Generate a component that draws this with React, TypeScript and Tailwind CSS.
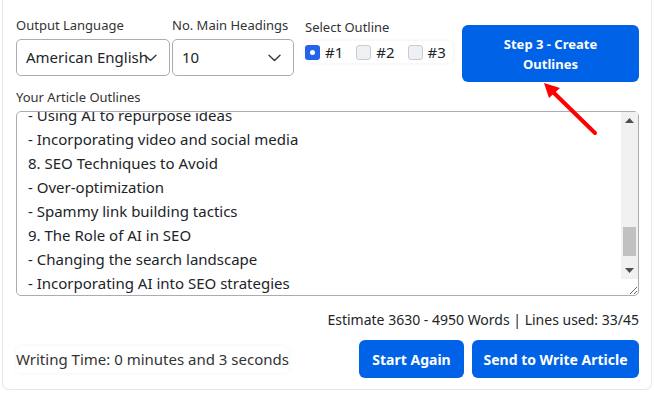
import { useEffect, useRef } from 'react'

const outline = [
  'Introduction',
  '- What this guide covers',
  '- Why AI is changing SEO',
  '1. Understanding SEO Basics',
  '- What is SEO',
  '- Why SEO matters',
  '2. Keyword Research Strategies',
  '- Finding the right keywords',
  '- Long-tail keywords',
  '3. On-Page SEO Optimization',
  '- Title tags and meta descriptions',
  '- Header tags and content structure',
  '4. Off-Page SEO Techniques',
  '- Building quality backlinks',
  '- Social media signals',
  '5. Technical SEO Essentials',
  '- Site speed and mobile friendliness',
  '- XML sitemaps and robots.txt',
  '6. Measuring SEO Success',
  '- Key metrics to track',
  '- Tools for SEO analysis',
  '7. Content Repurposing',
  '- Using AI to repurpose ideas',
  '- Incorporating video and social media',
  '8. SEO Techniques to Avoid',
  '- Over-optimization',
  '- Spammy link building tactics',
  '9. The Role of AI in SEO',
  '- Changing the search landscape',
  '- Incorporating AI into SEO strategies',
  '10. The Future of SEO',
  '- Voice search',
  '- Personalised results',
  'Conclusion',
  '- Key takeaways',
  '- Next steps',
]

function Chevron() {
  return (
    <svg width="13" height="8" viewBox="0 0 13 8" fill="none" className="shrink-0">
      <path d="M1 1.2 6.5 6.5 12 1.2" stroke="#343a40" strokeWidth="1.4" strokeLinecap="round" strokeLinejoin="round" />
    </svg>
  )
}

function Select({ value, width }: { value: string; width: string }) {
  return (
    <div className={`${width} h-[37px] flex items-center border border-[#a9adb3] rounded-[5px] bg-white pl-[9px] pr-[12px]`}>
      <span className="flex-1 min-w-0 overflow-hidden whitespace-nowrap text-[15px] text-[#212529] -mr-[6px]">{value}</span>
      <Chevron />
    </div>
  )
}

// scroll track drawn over the textarea (headless page hides native bars)
function ScrollTrack() {
  return (
    <div className="absolute right-[1px] top-[1px] bottom-[17px] w-[17px] bg-[#f1f1f1] flex flex-col pointer-events-none">
      <div className="h-[17px] flex items-center justify-center">
        <svg width="9" height="5" viewBox="0 0 9 5"><path d="M0 5h9L4.5 0z" fill="#505050" /></svg>
      </div>
      <div className="flex-1 relative">
        <div className="absolute left-[2px] right-[2px] top-[98px] h-[29px] bg-[#c1c1c1]" />
      </div>
      <div className="h-[17px] flex items-center justify-center">
        <svg width="9" height="5" viewBox="0 0 9 5"><path d="M0 0h9L4.5 5z" fill="#505050" /></svg>
      </div>
    </div>
  )
}

export default function App() {
  const taRef = useRef<HTMLTextAreaElement>(null)

  useEffect(() => {
    if (taRef.current) taRef.current.scrollTop = 24 * 22 + 15
  }, [])

  return (
    <div className="w-[654px] h-[394px] bg-white relative" style={{ fontFamily: '"Noto Sans", "Open Sans", sans-serif' }}>
      <div className="ml-[2px] mr-[2px] border border-t-0 border-[#e3e6ea] rounded-b-[7px] pl-[13px] pr-[12px] pt-[15px] h-[390px] flex flex-col">
        {/* top row */}
        <div className="flex items-start">
          <div className="flex flex-col">
            <label className="text-[13px] leading-[20px] text-[#333] mb-[4px]">Output Language</label>
            <Select value="American English" width="w-[154px]" />
          </div>
          <div className="flex flex-col ml-[2px]">
            <label className="text-[13px] leading-[20px] text-[#333] mb-[4px]">No. Main Headings</label>
            <Select value="10" width="w-[122px]" />
          </div>
          <div className="flex flex-col ml-[11px] pt-[2px]">
            <label className="text-[13px] leading-[20px] text-[#333]">Select Outline</label>
            <div className="flex items-center mt-[4px] h-[22px] w-[148px] rounded-[5px] shadow-[0_0_4px_rgba(0,0,0,0.07)] text-[15px] text-[#212529]">
              <span className="w-[15px] h-[15px] rounded-[3px] bg-[#2563eb] flex items-center justify-center">
                <span className="w-[5px] h-[5px] rounded-full bg-white" />
              </span>
              <span className="ml-[5px]">#1</span>
              <span className="ml-[13px] w-[15px] h-[15px] rounded-[3px] bg-[#eef0f3] border border-[#c9cdd3]" />
              <span className="ml-[5px]">#2</span>
              <span className="ml-[13px] w-[15px] h-[15px] rounded-[3px] bg-[#eef0f3] border border-[#c9cdd3]" />
              <span className="ml-[5px]">#3</span>
            </div>
          </div>
          <button className="ml-auto mt-[10px] w-[177px] h-[57px] rounded-[6px] bg-[#0062e6] text-white font-bold text-[13px] leading-[20px] flex items-center justify-center text-center">
            Step 3 - Create<br />Outlines
          </button>
        </div>

        {/* outline textarea */}
        <label className="mt-[5px] text-[13px] leading-[20px] text-[#333]">Your Article Outlines</label>
        <div className="relative mt-[4px]">
          <textarea
            ref={taRef}
            readOnly
            value={outline.join('\n')}
            className="block w-full h-[185px] border border-[#a9adb3] rounded-[5px] pl-[11px] pr-[20px] py-[6px] text-[15px] leading-[24px] text-[#212529] resize-y outline-none overflow-y-scroll [scrollbar-width:none]"
          />
          <ScrollTrack />
        </div>

        <div className="mt-[14px] text-right text-[14px] leading-[20px] text-[#212529]">
          Estimate 3630 - 4950 Words | Lines used: 33/45
        </div>

        <div className="mt-[10px] flex items-center">
          <div className="h-[27px] flex items-center rounded-[6px] shadow-[0_0_4px_rgba(0,0,0,0.06)] text-[15px] text-[#333]">
            Writing Time: 0 minutes and 3 seconds
          </div>
          <div className="ml-auto flex gap-[8px]">
            <button className="w-[105px] h-[38px] rounded-[6px] bg-[#0062e6] text-white font-bold text-[14px]">Start Again</button>
            <button className="w-[167px] h-[38px] rounded-[6px] bg-[#0062e6] text-white font-bold text-[14px]">Send to Write Article</button>
          </div>
        </div>
      </div>

      {/* red annotation arrow */}
      <svg className="absolute left-0 top-0 pointer-events-none" width="654" height="394">
        <line x1="595" y1="133" x2="553" y2="92" stroke="#ff0000" strokeWidth="4" strokeLinecap="round" />
        <polygon points="544,83 560,88 549,98" fill="#ff0000" />
      </svg>
    </div>
  )
}
